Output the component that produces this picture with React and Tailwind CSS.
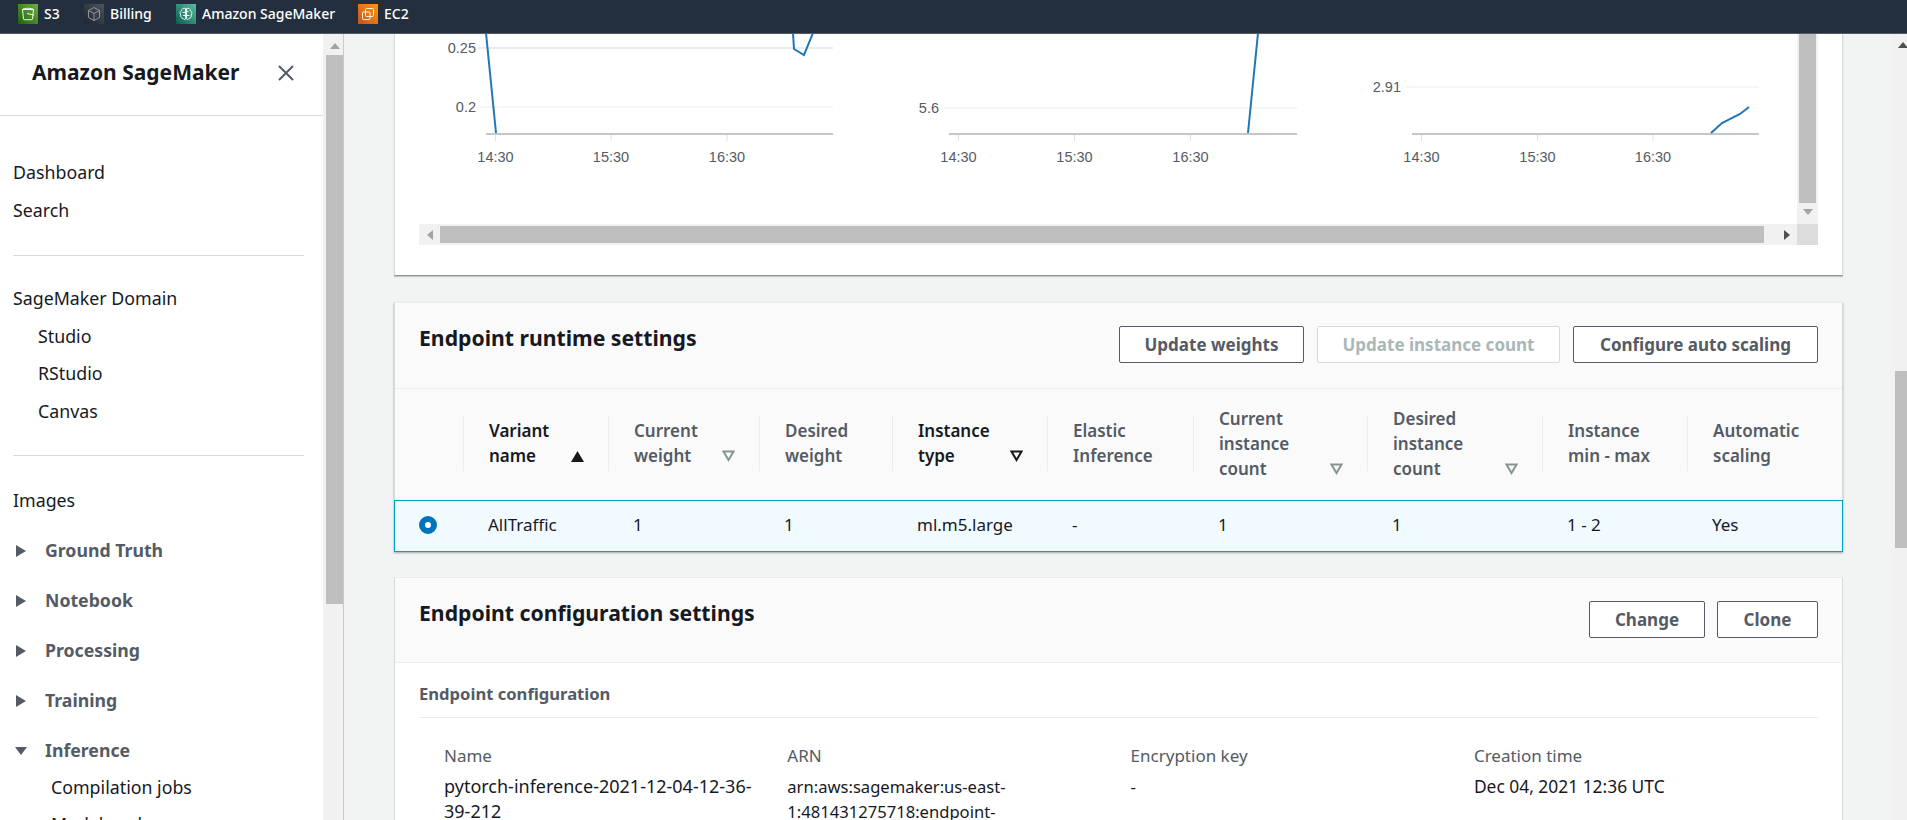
const FONT = "font-['Noto_Sans',sans-serif]";

function Fav({ bg, label, children, w }) {
  return (
    <div className={`flex items-center ${w}`}>
      <div className={`w-5 h-5 mr-[6px] flex items-center justify-center ${bg}`}>
        <svg width="16" height="16" viewBox="0 0 16 16" fill="none" stroke="#fff" strokeOpacity="0.9" strokeWidth="1">{children}</svg>
      </div>
      <span className="text-white text-[14px] font-medium leading-5">{label}</span>
    </div>
  );
}

function TopBar() {
  return (
    <div className="h-[34px] shrink-0 bg-[#232f3e] border-b border-[#545b64] flex items-start pt-1 pl-[18px]">
      <Fav bg="bg-gradient-to-tr from-[#1b660f] to-[#6cae3e]" label="S3" w="w-[66px]">
        <path d="M2.5 3.5h11l-1 9.5a1 1 0 0 1-1 .7h-7a1 1 0 0 1-1-.7z" />
        <path d="M2.5 3.5c1-1.6 10-1.6 11 0" />
        <path d="M7 7.5l7 1.6" />
      </Fav>
      <Fav bg="bg-gradient-to-tr from-[#1f2530] to-[#4e545c]" label="Billing" w="w-[92px]">
        <path d="M8 1.5l5.5 3v7L8 14.5l-5.5-3v-7z" stroke="#9aa0a6" />
        <path d="M2.5 4.5L8 7.5l5.5-3M8 7.5v7" stroke="#9aa0a6" />
      </Fav>
      <Fav bg="bg-gradient-to-tr from-[#055f4e] to-[#56c0a7]" label="Amazon SageMaker" w="w-[182px]">
        <path d="M7.5 2.5C5.5 1.5 3.5 3 3.6 4.7 2 5.5 1.6 7.8 2.8 9c-.6 1.8.8 3.6 2.4 3.5.6 1.4 2.4 1.4 2.3-.2z" />
        <path d="M8.5 2.5c2-1 4 .5 3.9 2.2 1.6.8 2 3.1.8 4.3.6 1.8-.8 3.6-2.4 3.5-.6 1.4-2.4 1.4-2.3-.2z" />
        <path d="M4.5 6.5h3M8.5 9.5h3M5 9.5h2.5M8.5 5.5h2" />
      </Fav>
      <Fav bg="bg-gradient-to-tr from-[#c8511b] to-[#ff9900]" label="EC2" w="w-[60px]">
        <rect x="5.5" y="2.5" width="8" height="8" rx="1" />
        <rect x="2.5" y="6" width="7.5" height="7.5" rx="1" />
      </Fav>
    </div>
  );
}

const Link = ({ children, indent = "pl-[13px]" }) => (
  <div className={`h-[37.5px] flex items-center text-[17.8px] text-[#16191f] ${indent}`}>{children}</div>
);

function Group({ label, open }) {
  return (
    <div className="h-[50px] flex items-center pl-[15px] text-[17.7px] font-bold text-[#545b64]">
      <svg width="12" height="12" viewBox="0 0 12 12" className="mr-[18px] shrink-0" fill="#545b64">
        {open ? <path d="M0 2h12L6 10z" /> : <path d="M1 0l10 6-10 6z" />}
      </svg>
      {label}
    </div>
  );
}

function Sidebar() {
  return (
    <div className="w-[323px] shrink-0 bg-white overflow-hidden">
      <div className="h-[82px] border-b border-[#d5dbdb] flex items-center pl-[32px] pb-[3px]">
        <span className="text-[21px] font-bold text-[#16191f] w-[246px]">Amazon SageMaker</span>
        <svg width="16" height="16" viewBox="0 0 16 16" fill="none" stroke="#545b64" strokeWidth="2">
          <path d="M1 1l14 14M15 1L1 15" />
        </svg>
      </div>
      <div className="pt-[38px]">
        <Link>Dashboard</Link>
        <Link>Search</Link>
      </div>
      <div className="mt-[26px] ml-[13px] mr-[19px] border-t border-[#d5dbdb]" />
      <div className="pt-[24px]">
        <Link>SageMaker Domain</Link>
        <Link indent="pl-[38px]">Studio</Link>
        <Link indent="pl-[38px]">RStudio</Link>
        <Link indent="pl-[38px]">Canvas</Link>
      </div>
      <div className="mt-[25px] ml-[13px] mr-[19px] border-t border-[#d5dbdb]" />
      <div className="pt-[26px]">
        <Link>Images</Link>
      </div>
      <div className="pt-[6px]">
        <Group label="Ground Truth" />
        <Group label="Notebook" />
        <Group label="Processing" />
        <Group label="Training" />
        <Group label="Inference" open />
      </div>
      <div className="-mt-[7px]">
        <Link indent="pl-[51px]">Compilation jobs</Link>
        <Link indent="pl-[51px]">Model packages</Link>
      </div>
    </div>
  );
}

function SideScroll() {
  return (
    <div className="w-[20px] shrink-0 bg-[#f1f1f1] flex flex-col items-center pl-[3px] pt-[9px]">
      <svg width="10" height="6" viewBox="0 0 10 6" fill="#a3a3a3"><path d="M0 6h10L5 0z" /></svg>
      <div className="w-[17px] h-[549px] bg-[#bebebe] mt-[6px] ml-[-1px]" />
    </div>
  );
}

function Chart({ x, w, yTicks, ticks, axisFrom, gridFrom, labelRight, right, lineSets }) {
  const labels = ["14:30", "15:30", "16:30"];
  return (
    <svg width={w} height="190" viewBox={`${x} 34 ${w} 190`} className="shrink-0 block">
      {yTicks.map((t) => (
        <g key={t.label}>
          <line x1={gridFrom} x2={right} y1={t.y} y2={t.y} stroke="#eaeded" strokeWidth={t.w || 1} />
          <text x={labelRight} y={t.y + 5} textAnchor="end" fontFamily="'Liberation Sans',sans-serif" fontSize="14.5" fill="#545b64">{t.label}</text>
        </g>
      ))}
      <line x1={axisFrom} x2={right} y1="134" y2="134" stroke="#c6c6c6" strokeWidth="2" />
      {ticks.map((t, i) => (
        <g key={t}>
          <line x1={t} x2={t} y1="135" y2="141" stroke="#e0e0e0" />
          <text x={t} y="162" textAnchor="middle" fontFamily="'Liberation Sans',sans-serif" fontSize="14.5" fill="#545b64">{labels[i]}</text>
        </g>
      ))}
      {lineSets.map((p, i) => (
        <polyline key={i} points={p} fill="none" stroke="#1f77b4" strokeWidth="2" />
      ))}
    </svg>
  );
}

function MetricsCard() {
  return (
    <div className="h-[242px] shrink-0 bg-white border-l border-r border-[#d5dbdb] border-b-[#879596] border-b shadow-[0_1px_1px_rgba(0,28,36,0.2)] pl-[24px] pr-[24px]">
      <div className="flex h-[190px]">
        <div className="flex flex-1 min-w-0 overflow-hidden">
          <Chart x={419} w={481} gridFrom={478} labelRight={476} axisFrom={486} right={833}
            yTicks={[{ label: "0.25", y: 48, w: 2 }, { label: "0.2", y: 107 }]}
            ticks={[495.5, 611, 727]}
            lineSets={["486,33 496,133", "793,33 794,49 804,55 813,33"]} />
          <Chart x={900} w={460} gridFrom={944} labelRight={939} axisFrom={949} right={1297}
            yTicks={[{ label: "5.6", y: 108 }]}
            ticks={[958.5, 1074.5, 1190.5]}
            lineSets={["1248,133 1258,33"]} />
          <Chart x={1360} w={437} gridFrom={1405} labelRight={1401} axisFrom={1412} right={1759}
            yTicks={[{ label: "2.91", y: 87 }]}
            ticks={[1421.5, 1537.5, 1653]}
            lineSets={["1711,133 1722,123 1740,114 1749,107"]} />
        </div>
        <div className="w-[21px] shrink-0 bg-[#f1f1f1] flex flex-col items-center">
          <div className="w-[17px] h-[169px] bg-[#bebebe]" />
          <svg width="10" height="6" viewBox="0 0 10 6" fill="#a3a3a3" className="mt-[6px]"><path d="M0 0h10L5 6z" /></svg>
        </div>
      </div>
      <div className="h-[21px] flex bg-[#f1f1f1] items-center">
        <div className="w-[21px] flex justify-center">
          <svg width="6" height="10" viewBox="0 0 6 10" fill="#a3a3a3"><path d="M6 0v10L0 5z" /></svg>
        </div>
        <div className="flex-1 h-[17px] bg-[#bebebe]" />
        <div className="w-[33px] flex justify-center pl-[13px]">
          <svg width="6" height="10" viewBox="0 0 6 10" fill="#505050"><path d="M0 0v10l6-5z" /></svg>
        </div>
        <div className="w-[21px] h-[21px] bg-[#dcdcdc]" />
      </div>
    </div>
  );
}

const Btn = ({ children, w, disabled, h = "h-[37px]" }) => (
  <div className={`${w} ${h} flex items-center justify-center rounded-[2px] border text-[17px] font-bold ${disabled ? "border-[#d5dbdb] text-[#aab7b8] bg-white" : "border-[#545b64] text-[#545b64] bg-white"}`}>
    {children}
  </div>
);

function Sort({ kind }) {
  if (kind === "asc") return <svg width="13" height="11" viewBox="0 0 13 11" fill="#16191f" className="shrink-0 mb-[6px]"><path d="M6.5 0L13 11H0z" /></svg>;
  const c = kind === "dark" ? "#16191f" : "#879596";
  return (
    <svg width="13" height="12" viewBox="0 0 13 12" fill="none" stroke={c} strokeWidth="2" className="shrink-0 mb-[6px]">
      <path d="M1.5 1.5h10L6.5 10z" />
    </svg>
  );
}

const columns = [
  { lines: ["Variant", "name"], sort: "asc", dark: true, val: "AllTraffic" },
  { lines: ["Current", "weight"], sort: "light", val: "1" },
  { lines: ["Desired", "weight"], val: "1" },
  { lines: ["Instance", "type"], sort: "dark", dark: true, val: "ml.m5.large" },
  { lines: ["Elastic", "Inference"], val: "-" },
  { lines: ["Current", "instance", "count"], sort: "light", val: "1" },
  { lines: ["Desired", "instance", "count"], sort: "light", val: "1" },
  { lines: ["Instance", "min - max"], val: "1 - 2" },
  { lines: ["Automatic", "scaling"], val: "Yes" },
];

const GRID = "grid grid-cols-[68px_145px_151px_133px_155px_146px_174px_175px_145px_1fr]";

function RuntimeCard() {
  return (
    <div className="mt-[26px] h-[250px] shrink-0 bg-[#fafafa] border-r border-l border-[#d5dbdb] border-t-[#eaeded] border-t shadow-[0_1px_2px_rgba(0,28,36,0.35)]">
      <div className="h-[86px] border-b border-[#eaeded] flex items-start justify-between pl-[24px] pr-[24px] pt-[23px]">
        <h2 className="text-[21.2px] font-bold text-[#16191f] leading-[30px] -mt-[3px]">Endpoint runtime settings</h2>
        <div className="flex gap-[13px]">
          <Btn w="w-[185px]">Update weights</Btn>
          <Btn w="w-[243px]" disabled>Update instance count</Btn>
          <Btn w="w-[245px]">Configure auto scaling</Btn>
        </div>
      </div>
      <div className={`${GRID} h-[111px] items-center pb-[3px]`}>
        <div />
        {columns.map((c) => (
          <div key={c.lines.join()} className={`h-[55px] border-l border-[#eaeded] pl-[25px] pr-[24px] flex items-center justify-between text-[17px] leading-[25px] font-bold ${c.dark ? "text-[#16191f]" : "text-[#545b64]"}`}>
            <div className="shrink-0 flex items-end justify-between w-full">
              <div className="font-semibold">
                {c.lines.map((l) => <div key={l}>{l}</div>)}
              </div>
              {c.sort && <Sort kind={c.sort} />}
            </div>
          </div>
        ))}
      </div>
      <div className={`${GRID} h-[52px] items-center pb-[2px] bg-[#f1faff] border border-[#00a1c9] -mx-px text-[17px] text-[#16191f]`}>
        <div className="pl-[24px]">
          <div className="w-[18px] h-[18px] rounded-full bg-white border-[6px] border-[#0073bb]" />
        </div>
        {columns.map((c, i) => (
          <div key={i} className="pl-[25px]">{c.val}</div>
        ))}
      </div>
    </div>
  );
}

function ConfigCard() {
  const items = [
    ["Name", ["pytorch-inference-2021-12-04-12-36-", "39-212"], "text-[18px]"],
    ["ARN", ["arn:aws:sagemaker:us-east-", "1:481431275718:endpoint-", "config/pytorch-inference"], "text-[16.6px]"],
    ["Encryption key", ["-"], "text-[17px]"],
    ["Creation time", ["Dec 04, 2021 12:36 UTC"], "text-[17.4px]"],
  ];
  return (
    <div className="mt-[25px] flex-1 min-h-[243px] shrink-0 bg-white border-l border-r border-[#d5dbdb] border-t-[#eaeded] border-t">
      <div className="h-[85px] bg-[#fafafa] border-b border-[#eaeded] flex items-start justify-between pl-[24px] pr-[24px] pt-[23px]">
        <h2 className="text-[21.2px] font-bold text-[#16191f] leading-[30px] -mt-[3px]">Endpoint configuration settings</h2>
        <div className="flex gap-[12px]">
          <Btn w="w-[116px]">Change</Btn>
          <Btn w="w-[101px]">Clone</Btn>
        </div>
      </div>
      <div className="ml-[24px] mr-[24px] h-[55px] border-b border-[#eaeded] flex items-center pt-[8px] text-[16.6px] font-bold text-[#545b64]">
        Endpoint configuration
      </div>
      <div className="grid grid-cols-[repeat(4,343.3px)] pl-[49px] pt-[25px] text-[17px]">
        {items.map(([k, v, size]) => (
          <div key={k}>
            <div className="text-[#545b64] leading-[25px]">{k}</div>
            <div className={`text-[#16191f] leading-[25px] mt-[6px] ${size}`}>
              {v.map((l) => <div key={l} className="whitespace-nowrap">{l}</div>)}
            </div>
          </div>
        ))}
      </div>
    </div>
  );
}

function PageScroll() {
  return (
    <div className="w-[15px] shrink-0 bg-[#f1f1f1] flex flex-col items-end">
      <svg width="10" height="6" viewBox="0 0 10 6" fill="#505050" className="mt-[8px] -mr-[1px]"><path d="M0 6h10L5 0z" /></svg>
      <div className="w-[12px] h-[177px] bg-[#bebebe] mt-[323px]" />
    </div>
  );
}

export default function App() {
  return (
    <div className={`h-screen w-full overflow-hidden flex flex-col bg-[#f2f3f3] ${FONT}`}>
      <TopBar />
      <div className="flex flex-1 min-h-0">
        <Sidebar />
        <SideScroll />
        <div className="w-[1px] shrink-0 bg-[#c8cbcb]" />
        <div className="flex-1 min-w-0 flex flex-col pl-[50px] pr-[49px] overflow-hidden">
          <MetricsCard />
          <RuntimeCard />
          <ConfigCard />
        </div>
        <PageScroll />
      </div>
    </div>
  );
}
